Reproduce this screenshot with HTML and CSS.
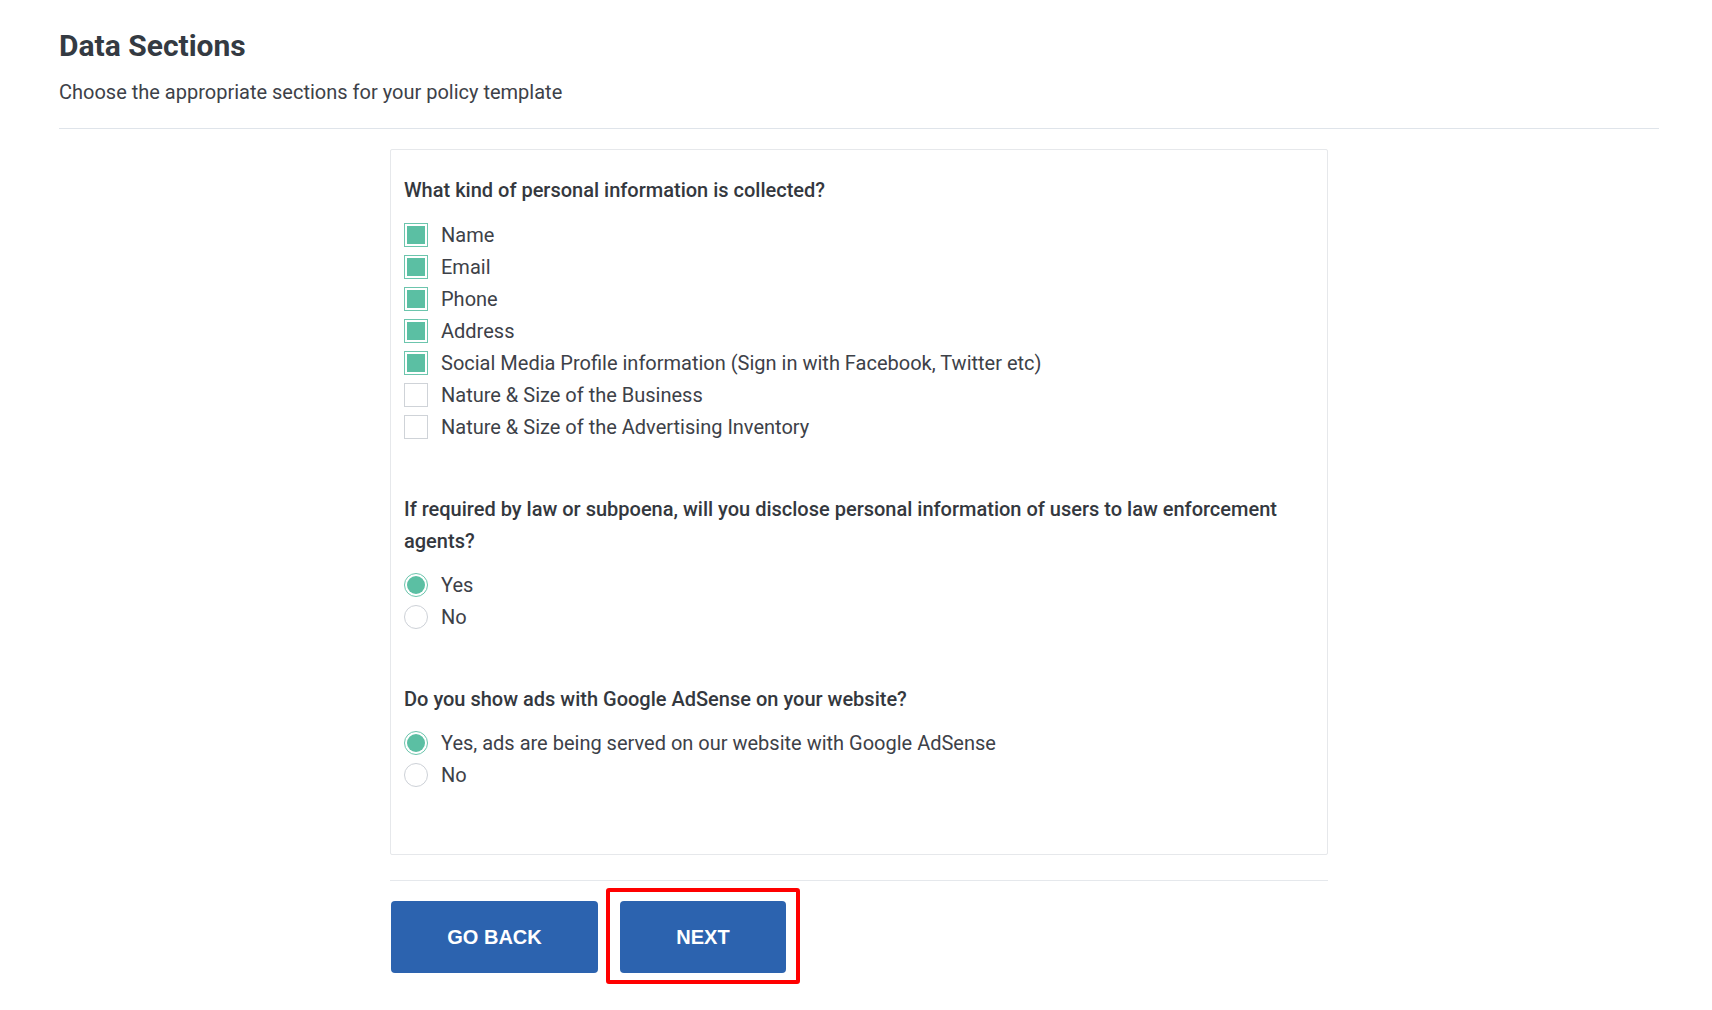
FILE: index.html
```html
<!DOCTYPE html>
<html lang="en">
<head>
<meta charset="utf-8">
<title>Data Sections</title>
<link rel="stylesheet" href="styles.css">
</head>
<body>
<div class="page">
  <header class="page-head">
    <h1 class="title">Data Sections</h1>
    <p class="subtitle">Choose the appropriate sections for your policy template</p>
  </header>
  <hr class="divider">
  <div class="wrap">
    <div class="card">
      <div class="group">
        <div class="question">What kind of personal information is collected?</div>
        <ul class="options">
          <li class="opt"><span class="box checked"></span><span class="label">Name</span></li>
          <li class="opt"><span class="box checked"></span><span class="label">Email</span></li>
          <li class="opt"><span class="box checked"></span><span class="label">Phone</span></li>
          <li class="opt"><span class="box checked"></span><span class="label">Address</span></li>
          <li class="opt"><span class="box checked"></span><span class="label">Social Media Profile information (Sign in with Facebook, Twitter etc)</span></li>
          <li class="opt"><span class="box"></span><span class="label">Nature &amp; Size of the Business</span></li>
          <li class="opt"><span class="box"></span><span class="label">Nature &amp; Size of the Advertising Inventory</span></li>
        </ul>
      </div>
      <div class="group">
        <div class="question">If required by law or subpoena, will you disclose personal information of users to law enforcement agents?</div>
        <ul class="options radios">
          <li class="opt"><span class="radio checked"></span><span class="label">Yes</span></li>
          <li class="opt"><span class="radio"></span><span class="label">No</span></li>
        </ul>
      </div>
      <div class="group">
        <div class="question">Do you show ads with Google AdSense on your website?</div>
        <ul class="options radios">
          <li class="opt"><span class="radio checked"></span><span class="label">Yes, ads are being served on our website with Google AdSense</span></li>
          <li class="opt"><span class="radio"></span><span class="label">No</span></li>
        </ul>
      </div>
    </div>
    <hr class="divider small">
    <div class="actions">
      <button class="btn back">GO BACK</button>
      <span class="next-wrap">
        <button class="btn next">NEXT</button>
        <span class="highlight"></span>
      </span>
    </div>
  </div>
</div>
</body>
</html>
```
FILE: styles.css
```css
* { box-sizing: border-box; }
html, body { margin: 0; padding: 0; background: #ffffff; }
body {
  font-family: Roboto, "Liberation Sans", Arial, sans-serif;
  color: #3d4148;
}
.page {
  padding: 28px 53px 40px 59px;
}
.title {
  margin: 0;
  font-size: 30px;
  line-height: 36px;
  font-weight: 700;
  color: #343a42;
}
.subtitle {
  margin: 13px 0 0;
  font-size: 20px;
  line-height: 30px;
  color: #3d4148;
}
.divider {
  border: 0;
  border-top: 1px solid #dfe4ea;
  margin: 21px 0 0;
  height: 0;
}
.wrap {
  width: 938px;
  margin: 20px auto 0;
}
.card {
  border: 1px solid #e6e8eb;
  padding: 24px 13px 13px;
  border-radius: 2px;
}
.group {
  margin-bottom: 50px;
}
.question {
  font-size: 20px;
  line-height: 32px;
  font-weight: 500;
  color: #34383e;
}
.options {
  list-style: none;
  margin: 13px 0 0;
  padding: 0;
}
.options.radios {
  margin-top: 12px;
}
.opt {
  display: flex;
  align-items: center;
  height: 32px;
  gap: 13px;
}
.label {
  font-size: 20px;
  line-height: 32px;
  color: #3d4148;
}
.box {
  width: 24px;
  height: 24px;
  flex: none;
  border: 1px solid #cfd3d8;
  background: #fff;
  padding: 2px;
}
.box.checked {
  border-color: #6cc5ad;
}
.box.checked::before {
  content: "";
  display: block;
  width: 100%;
  height: 100%;
  background: #5bbfa3;
}
.radio {
  width: 24px;
  height: 24px;
  flex: none;
  border: 1px solid #cdd1d7;
  border-radius: 50%;
  background: #fff;
  padding: 2px;
}
.radio.checked {
  border: 1.5px solid #6cc5ad;
}
.radio.checked::before {
  content: "";
  display: block;
  width: 100%;
  height: 100%;
  border-radius: 50%;
  background: #5bbfa3;
}
.divider.small {
  margin-top: 25px;
  border-top-color: #e5e8ec;
}
.actions {
  display: flex;
  gap: 22px;
  margin-top: 20px;
  padding-left: 1px;
}
.btn {
  height: 72px;
  border: 0;
  border-radius: 4px;
  background: #2c63af;
  color: #ffffff;
  font-family: "Liberation Sans", Arial, sans-serif;
  font-weight: 700;
  font-size: 20px;
  padding: 0;
  cursor: pointer;
}
.back { width: 207px; }
.next { width: 166px; display: block; }
.next-wrap {
  position: relative;
  display: block;
}
.highlight {
  position: absolute;
  left: -14px;
  right: -14px;
  top: -13px;
  bottom: -11px;
  border: 4px solid #ff0000;
  border-radius: 3px;
  pointer-events: none;
}
```
